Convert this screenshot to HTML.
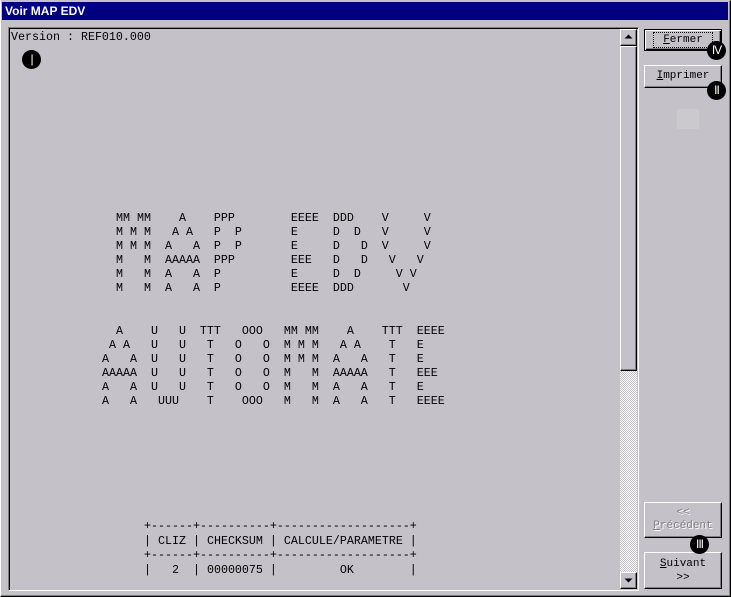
<!DOCTYPE html>
<html><head><meta charset="utf-8">
<style>
*{margin:0;padding:0;box-sizing:border-box}
body{width:731px;height:597px;background:#c4c1c8;position:relative;overflow:hidden;font-family:"Liberation Mono",monospace}
.abs{position:absolute}
#win{left:0;top:0;width:731px;height:597px;border-top:1px solid #c4c1c8;border-left:1px solid #fff;border-right:1px solid #000;border-bottom:1px solid #000;box-shadow:inset -1px -1px 0 #808080}
#title{left:2px;top:2px;width:726px;height:18px;background:#000080;color:#fff;font:bold 12px "Liberation Sans",sans-serif;line-height:18px;padding-left:3px}
#panel{left:8px;top:27px;width:631px;height:564px;border-top:1px solid #808080;border-left:1px solid #808080;border-right:1px solid #fff;border-bottom:1px solid #fff}
#inner{left:9px;top:28px;width:629px;height:562px;border-top:1px solid #000;border-left:1px solid #000}
pre{position:absolute;font-family:"Liberation Mono",monospace;font-size:11.67px;line-height:14px;color:#000}
#sb{left:620px;top:29px;width:17px;height:560px;background-color:#fff;background-image:repeating-conic-gradient(#c4c1c8 0 25%,#fff 0 50%);background-size:2px 2px}
.btn3d{position:absolute;background:#c4c1c8;border-top:1px solid #fff;border-left:1px solid #fff;border-right:1px solid #000;border-bottom:1px solid #000;box-shadow:inset -1px -1px 0 #808080}
.pb{position:absolute;background:#c4c1c8;border-top:1px solid #fff;border-left:1px solid #fff;border-right:1px solid #000;border-bottom:1px solid #000;box-shadow:inset -1px -1px 0 #808080;font-family:"Liberation Mono",monospace;font-size:11px;text-align:center;color:#000}
.dot{position:absolute;width:19px;height:19px;border-radius:50%;background:#000;color:#fff;font:12px "Liberation Sans",sans-serif;text-align:center;line-height:19px;letter-spacing:-1px}
</style></head><body>
<div id="win" class="abs"></div>
<div id="title" class="abs">Voir MAP EDV</div>
<div id="panel" class="abs"></div>
<div id="inner" class="abs"></div>

<pre style="left:11px;top:30px">Version : REF010.000</pre>

<pre style="left:116px;top:211px">MM MM    A    PPP        EEEE  DDD    V     V
M M M   A A   P  P       E     D  D   V     V
M M M  A   A  P  P       E     D   D  V     V
M   M  AAAAA  PPP        EEE   D   D   V   V
M   M  A   A  P          E     D  D     V V
M   M  A   A  P          EEEE  DDD       V</pre>

<pre style="left:102px;top:324px">  A    U   U  TTT   OOO   MM MM    A    TTT  EEEE
 A A   U   U   T   O   O  M M M   A A    T   E
A   A  U   U   T   O   O  M M M  A   A   T   E
AAAAA  U   U   T   O   O  M   M  AAAAA   T   EEE
A   A  U   U   T   O   O  M   M  A   A   T   E
A   A   UUU    T    OOO   M   M  A   A   T   EEEE</pre>

<pre style="left:144px;top:519px;line-height:14.5px">+------+----------+-------------------+
| CLIZ | CHECKSUM | CALCULE/PARAMETRE |
+------+----------+-------------------+
|   2  | 00000075 |         OK        |</pre>

<div id="sb" class="abs"></div>
<div class="btn3d" style="left:620px;top:29px;width:17px;height:17px"></div>
<svg class="abs" style="left:624px;top:34px" width="9" height="6"><polygon points="4.5,0.5 0.5,4.5 8.5,4.5" fill="#000"/></svg>
<div class="btn3d" style="left:620px;top:46px;width:17px;height:325px"></div>
<div class="btn3d" style="left:620px;top:572px;width:17px;height:17px"></div>
<svg class="abs" style="left:624px;top:578px" width="9" height="6"><polygon points="0.5,0.5 8.5,0.5 4.5,4.5" fill="#000"/></svg>

<div class="pb" style="left:644px;top:29px;width:78px;height:22px;border:1px solid #000;box-shadow:inset 1px 1px 0 #fff,inset -1px -1px 0 #000,inset -2px -2px 0 #808080;line-height:20px"><span style="outline:1px dotted #000;outline-offset:1px;padding:0 8px"><u>F</u>ermer</span></div>
<div class="pb" style="left:644px;top:65px;width:78px;height:23px;line-height:21px"><u>I</u>mprimer</div>
<div class="abs" style="left:677px;top:109px;width:22px;height:20px;background:#cbc8ce"></div>

<div class="pb" style="left:644px;top:502px;width:78px;height:36px;color:#808080;line-height:13px;padding-top:4px;text-shadow:1px 1px 0 #fff">&lt;&lt;<br><u>P</u>récédent</div>
<div class="pb" style="left:644px;top:552px;width:78px;height:37px;line-height:14px;padding-top:4px"><u>S</u>uivant<br>&gt;&gt;</div>

<div class="dot" style="left:22px;top:50px">|</div>
<div class="dot" style="left:707px;top:41px">IV</div>
<div class="dot" style="left:707px;top:81px">II</div>
<div class="dot" style="left:690px;top:535px">III</div>
</body></html>
